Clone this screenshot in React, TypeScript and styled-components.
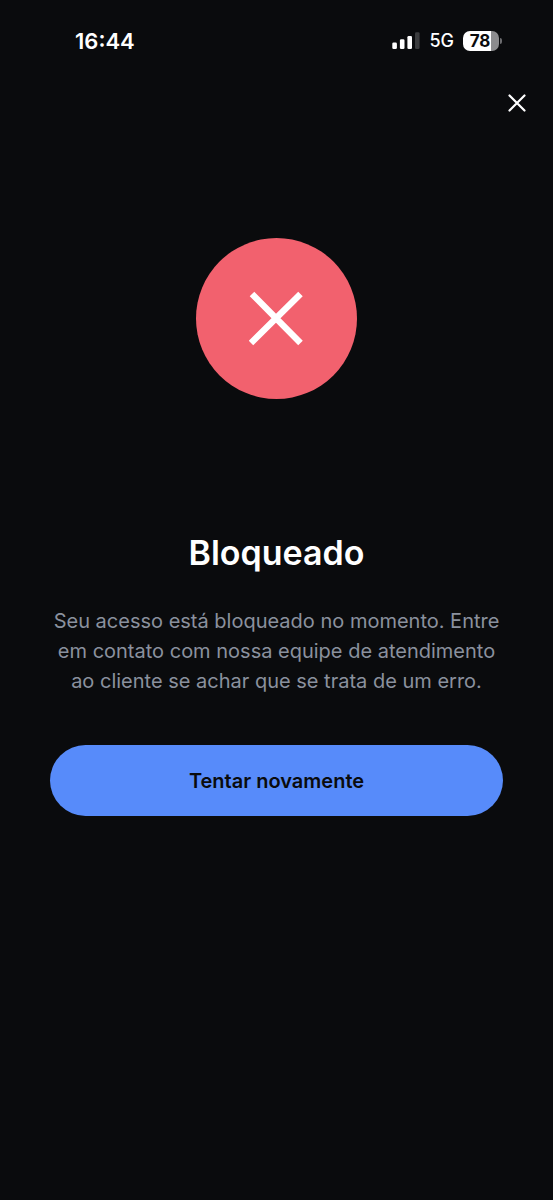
import React from "react";
import styled, { createGlobalStyle } from "styled-components";

const GlobalStyle = createGlobalStyle`
  *, *::before, *::after { box-sizing: border-box; }
  html, body { margin: 0; background: #0a0b0d; }
  body { font-family: Inter, "Liberation Sans", sans-serif; color: #ffffff; }
`;

const Screen = styled.div`
  display: flex;
  flex-direction: column;
  min-height: 100vh;
  background: #0a0b0d;
`;

const StatusBar = styled.header`
  display: flex;
  align-items: center;
  justify-content: space-between;
  height: 82px;
  padding: 0 51px 0 75px;
`;

const Clock = styled.time`
  font-size: 22px;
  line-height: 28px;
  font-weight: 600;
`;

const Indicators = styled.div`
  display: flex;
  align-items: center;
  gap: 9px;
`;

const Network = styled.span`
  font-size: 18px;
  line-height: 20px;
  font-weight: 500;
`;

const Battery = styled.div`
  display: flex;
  align-items: center;
  gap: 1px;
`;

const BatteryBody = styled.div<{ $level: number }>`
  width: 36px;
  height: 20px;
  padding-right: 2px;
  border-radius: 7px;
  text-align: center;
  color: #0a0b0d;
  font-size: 17px;
  line-height: 20px;
  font-weight: 700;
  background: linear-gradient(
    to right,
    #ffffff ${(p) => p.$level}%,
    #8c8c8e ${(p) => p.$level}%
  );
`;

const BatteryTip = styled.div`
  width: 2px;
  height: 6px;
  border-radius: 0 2px 2px 0;
  background: #6c6c6e;
`;

const Toolbar = styled.nav`
  display: flex;
  justify-content: flex-end;
  padding: 0 15px;
`;

const CloseButton = styled.button`
  display: grid;
  place-items: center;
  width: 42px;
  height: 42px;
  padding: 0;
  border: 0;
  background: none;
  color: #ffffff;
  cursor: pointer;
`;

const Content = styled.main`
  display: flex;
  flex-direction: column;
  align-items: center;
  padding: 114px 50px 40px;
`;

const StatusMark = styled.div`
  display: grid;
  place-items: center;
  width: 161px;
  height: 161px;
  border-radius: 50%;
  background: #f2616e;
`;

const Title = styled.h1`
  margin: 132px 0 31px;
  font-size: 34px;
  line-height: 44px;
  font-weight: 600;
  text-align: center;
`;

const Message = styled.p`
  margin: 0 0 49px;
  color: #8a919e;
  font-size: 20px;
  line-height: 30px;
  text-align: center;
`;

const PrimaryButton = styled.button`
  width: 100%;
  height: 71px;
  border: 0;
  border-radius: 36px;
  background: #578bfa;
  color: #0a0b0d;
  font-family: inherit;
  font-size: 20px;
  line-height: 28px;
  font-weight: 600;
  cursor: pointer;
`;

const SignalIcon = () => (
  <svg width="28" height="18" viewBox="0 0 28 18" role="img" aria-label="Sinal">
    <g fill="#ffffff">
      <rect x="0.3" y="10.5" width="4.6" height="6.5" rx="1.3" />
      <rect x="7.9" y="7.2" width="4.6" height="9.8" rx="1.3" />
      <rect x="15.4" y="4" width="4.6" height="13" rx="1.3" />
    </g>
    <rect x="23" y="0.3" width="4.6" height="16.7" rx="1.3" fill="#3b3c3e" />
  </svg>
);

const CloseIcon = () => (
  <svg width="18" height="18" viewBox="0 0 18 18" aria-hidden="true">
    <path
      d="M1.5 1.5 16.5 16.5M16.5 1.5 1.5 16.5"
      stroke="currentColor"
      strokeWidth="2.2"
      strokeLinecap="round"
    />
  </svg>
);

const BlockedIcon = () => (
  <svg width="55" height="55" viewBox="0 0 55 55" aria-hidden="true">
    <path d="M3 3 51.5 52M51.5 3 2 52" stroke="#ffffff" strokeWidth="6.4" />
  </svg>
);

export default function App() {
  return (
    <Screen>
      <GlobalStyle />
      <StatusBar>
        <Clock>16:44</Clock>
        <Indicators>
          <SignalIcon />
          <Network>5G</Network>
          <Battery>
            <BatteryBody $level={78}>78</BatteryBody>
            <BatteryTip />
          </Battery>
        </Indicators>
      </StatusBar>
      <Toolbar>
        <CloseButton type="button" aria-label="Fechar">
          <CloseIcon />
        </CloseButton>
      </Toolbar>
      <Content>
        <StatusMark>
          <BlockedIcon />
        </StatusMark>
        <Title>Bloqueado</Title>
        <Message>
          Seu acesso está bloqueado no momento. Entre em contato com nossa
          equipe de atendimento ao cliente se achar que se trata de um erro.
        </Message>
        <PrimaryButton type="button">Tentar novamente</PrimaryButton>
      </Content>
    </Screen>
  );
}
